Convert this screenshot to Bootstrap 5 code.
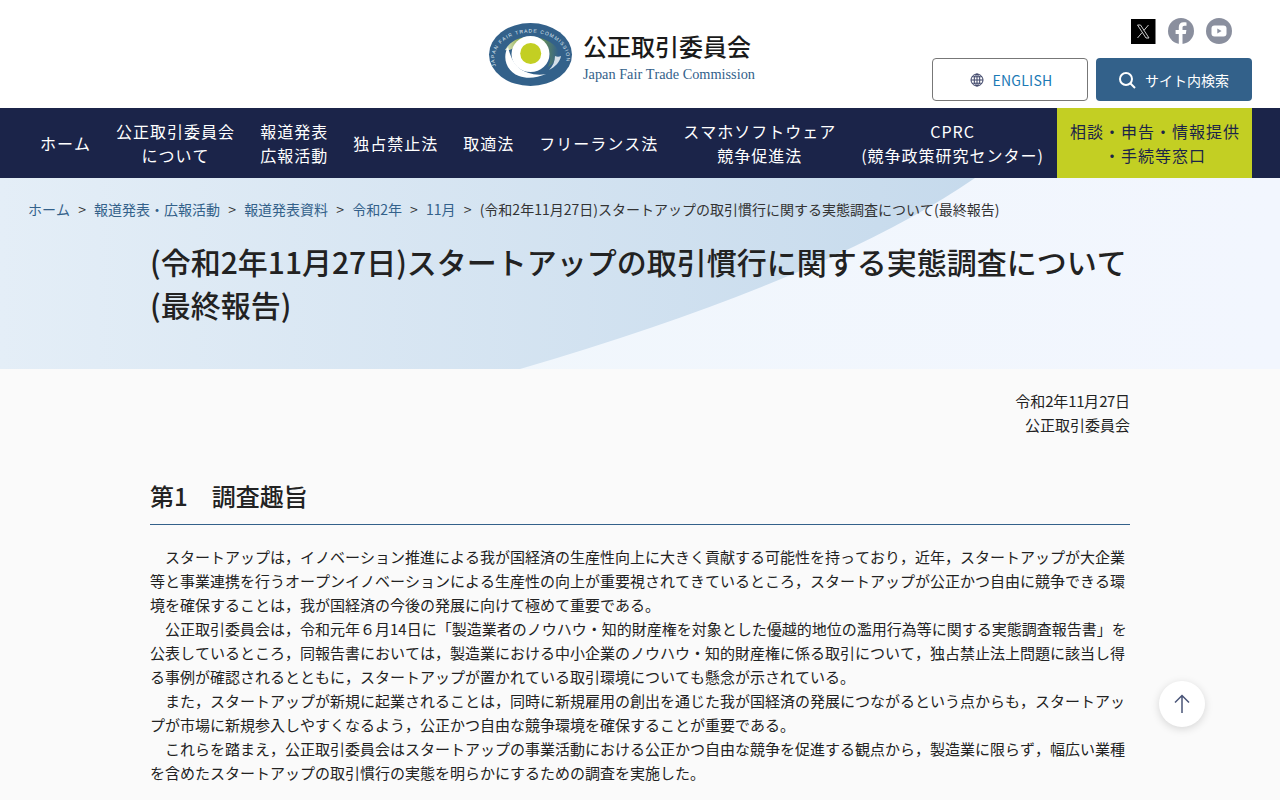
<!DOCTYPE html>
<html lang="ja"><head><meta charset="utf-8">
<title>公正取引委員会</title>
<link href="https://cdn.jsdelivr.net/npm/bootstrap@5.3.0/dist/css/bootstrap.min.css" rel="stylesheet">
<style>
html,body{height:800px;overflow:hidden}
body{font-family:"Noto Sans CJK JP","Noto Sans",sans-serif;background:#fafafa;color:#222;font-size:15px;line-height:24px;font-kerning:none}
.site-head{height:108px;background:#fff;padding:0 28px}
.logo-wrap{left:489px;top:23px}
.logo-svg{overflow:visible}
.logo-txt{margin-left:2px;padding-top:2px}
.logo-ja{font-size:24px;font-weight:500;line-height:34px;color:#1a1a1a}
.logo-en{font-family:"Liberation Serif",serif;font-size:14.300px;line-height:18px;color:#33618a;margin-top:2px}
.head-right{width:320px;padding-top:18px}
.soc-row{padding-right:20px;margin-bottom:14px;gap:12px}
.soc-ico{width:26px;height:26px;display:block}
.btn-en{width:156px;height:43px;border:1px solid #777;border-radius:4px;background:#fff;color:#1b7ab5;font-size:14px;line-height:1;padding:0 0 0 3px;letter-spacing:.25px}
.btn-search{width:156px;height:43px;border:0;border-radius:4px;background:#33618a;color:#fff;font-size:14px;line-height:1;padding:0}
.ico-gap{margin-right:8px}
.ico-gap-s{margin-right:9px;margin-left:-1px}
.main-nav{height:70px;background:#1b2449;padding:0 28px 0 27.600px}
.nav-it{color:#fff;font-size:16px;line-height:24px;letter-spacing:1px;text-decoration:none;text-align:center;height:70px;padding:0 12.500px}
.nav-cta{background:#c3cf23;color:#1b2449;width:195px;flex:none;padding:0 0 0 1px}
.hero{height:191px;background:linear-gradient(90deg,#f0f7fb,#f2f6fe)}
.hero-svg{left:0;top:0;width:1280px;height:191px}
.crumbs{padding:19px 28px 0;font-size:14px;line-height:24px;color:#333;gap:8.150px;position:relative}
.crumbs a{color:#33618a;text-decoration:none}
.ttl-wrap{width:980px;margin:0 auto;position:relative}
.page-ttl{font-size:30px;line-height:42.500px;font-weight:500;margin:19px 0 0;color:#222}
.wrap-main{width:980px;margin:0 auto}
.doc-date{padding-top:20px;font-size:15px}
.date-num{letter-spacing:-.4px}
.sec-h{font-size:24px;line-height:36px;font-weight:500;margin:41px 0 0;padding-bottom:10px;border-bottom:1px solid #33618a;color:#222}
.body-txt{margin:20px 0 0;font-size:15px;line-height:24px;color:#222}
.to-top{right:75px;top:681px;width:46px;height:46px;background:#fff;border-radius:50%;box-shadow:0 2px 8px rgba(0,0,0,.15)}
</style></head>
<body>
<header class="site-head d-flex justify-content-end position-relative">
  <a class="logo-wrap position-absolute d-flex align-items-center text-decoration-none" href="#">
    <svg width="84" height="63" viewBox="0 0 84 63" class="me-2 logo-svg">
      <defs>
        <linearGradient id="lg" x1="0" y1="0" x2="1" y2="0"><stop offset="0" stop-color="#dfe8cf"/><stop offset=".3" stop-color="#8aa83c"/><stop offset=".65" stop-color="#6d9450"/><stop offset="1" stop-color="#33618a"/></linearGradient>
        <path id="ringp" d="M7 43A36 26 0 1 1 76 43"/>
      </defs>
      <ellipse cx="41.500" cy="31.500" rx="41.500" ry="31.500" fill="#33618a"/>
      <path d="M16 27C22 17 31 14 41 14 52 14 64 18 69 27 71 33 66 40 59 44 62 38 63 30 56 24 48 18 32 18 26 24 22 27 19 28 16 27Z" fill="url(#lg)"/>
      <path d="M19 24C13 34 17 48 30 53 38 56 48 55 57 51 47 53 36 50 30 45 24 40 21 32 19 24Z" fill="#fff"/>
      <path d="M72 33C71 39 66 44 60 47 64 43 66 38 66 33 68 34 70 34 72 33Z" fill="#d5dfe8"/>
      <ellipse cx="41.500" cy="31" rx="19" ry="18" fill="#fff"/>
      <circle cx="41.700" cy="30.500" r="10.500" fill="#c3cf23"/>
      <text font-family="Liberation Sans,sans-serif" font-size="5" fill="#dfe7ef"><textPath href="#ringp" textLength="108">JAPAN FAIR TRADE COMMISSION</textPath></text>
    </svg>
    <span class="d-block logo-txt">
      <span class="logo-ja d-block">公正取引委員会</span>
      <span class="logo-en d-block">Japan Fair Trade Commission</span>
    </span>
  </a>
  <div class="head-right d-flex flex-column align-items-end">
    <div class="soc-row d-flex">
      <svg class="soc-ico" viewBox="0 0 26 26"><rect x="1" y="1" width="24.500" height="25" fill="#000"/><path d="M7.500 7h3l8.500 13h-3zM18.500 7L14 12.300M12 14.700L7.500 20" fill="none" stroke="#ccc" stroke-width="1"/></svg>
      <svg class="soc-ico" viewBox="0 0 26 26"><circle cx="13" cy="13" r="13" fill="#8a8f9e"/><path d="M14.500 26V16h3.300l.6-4h-3.900V9.800c0-1.200.5-2 2.100-2h1.900V4.400c-.8-.1-1.800-.2-2.800-.2-3 0-4.900 1.800-4.900 5V12H7.600v4h3.200v10z" fill="#fff"/></svg>
      <svg class="soc-ico" viewBox="0 0 26 26"><circle cx="13" cy="13" r="13" fill="#8a8f9e"/><rect x="5.500" y="7.500" width="15" height="11" rx="3" fill="#fff"/><path d="M11.300 10.500v5l4.300-2.500z" fill="#8a8f9e"/></svg>
    </div>
    <div class="d-flex gap-2">
      <button class="btn-en d-flex align-items-center justify-content-center" type="button">
        <svg width="14" height="14" viewBox="0 0 14 14" class="ico-gap" fill="none" stroke="#3b4266" stroke-width="1"><circle cx="7" cy="7" r="6"/><ellipse cx="7" cy="7" rx="2.800" ry="6"/><path d="M1 7h12M2 3.800h10M2 10.200h10M7 1v12"/></svg>ENGLISH</button>
      <button class="btn-search d-flex align-items-center justify-content-center" type="button">
        <svg width="18" height="18" viewBox="0 0 18 18" class="ico-gap-s" fill="none" stroke="#fff" stroke-width="2"><circle cx="8" cy="8" r="6"/><path d="M12.500 12.500L17 17"/></svg>サイト内検索</button>
    </div>
  </div>
</header>
<nav class="main-nav d-flex justify-content-between">
  <div class="d-flex">
  <a class="nav-it d-flex align-items-center justify-content-center" href="#">ホーム</a>
  <a class="nav-it d-flex align-items-center justify-content-center" href="#">公正取引委員会<br>について</a>
  <a class="nav-it d-flex align-items-center justify-content-center" href="#">報道発表<br>広報活動</a>
  <a class="nav-it d-flex align-items-center justify-content-center" href="#">独占禁止法</a>
  <a class="nav-it d-flex align-items-center justify-content-center" href="#">取適法</a>
  <a class="nav-it d-flex align-items-center justify-content-center" href="#">フリーランス法</a>
  <a class="nav-it d-flex align-items-center justify-content-center" href="#">スマホソフトウェア<br>競争促進法</a>
  <a class="nav-it d-flex align-items-center justify-content-center" href="#">CPRC<br>(競争政策研究センター)</a>
  </div>
  <a class="nav-it nav-cta d-flex align-items-center justify-content-center" href="#">相談・申告・情報提供<br>・手続等窓口</a>
</nav>
<section class="hero position-relative overflow-hidden">
  <svg class="hero-svg position-absolute" viewBox="0 0 1280 191" preserveAspectRatio="none">
    <defs><linearGradient id="hg" x1="0" y1="0" x2="1" y2="0"><stop offset="0" stop-color="#e4eef7"/><stop offset="1" stop-color="#c6daec"/></linearGradient></defs>
    <path d="M0 0H975Q830 100 520 191H0Z" fill="url(#hg)"/>
  </svg>
  <div class="crumbs d-flex">
    <a href="#">ホーム</a><span>&gt;</span><a href="#">報道発表・広報活動</a><span>&gt;</span><a href="#">報道発表資料</a><span>&gt;</span><a href="#">令和2年</a><span>&gt;</span><a href="#">11月</a><span>&gt;</span><span>(令和2年11月27日)スタートアップの取引慣行に関する実態調査について(最終報告)</span>
  </div>
  <div class="ttl-wrap"><h1 class="page-ttl">(令和2年11月27日)スタートアップの取引慣行に関する実態調査について(最終報告)</h1></div>
</section>
<main class="wrap-main">
  <div class="doc-date text-end">令和<span class="date-num">2</span>年<span class="date-num">11</span>月<span class="date-num">27</span>日<br>公正取引委員会</div>
  <h2 class="sec-h">第1　調査趣旨</h2>
  <p class="body-txt">　スタートアップは，イノベーション推進による我が国経済の生産性向上に大きく貢献する可能性を持っており，近年，スタートアップが大企業等と事業連携を行うオープンイノベーションによる生産性の向上が重要視されてきているところ，スタートアップが公正かつ自由に競争できる環境を確保することは，我が国経済の今後の発展に向けて極めて重要である。<br>
  　公正取引委員会は，令和元年６月14日に「製造業者のノウハウ・知的財産権を対象とした優越的地位の濫用行為等に関する実態調査報告書」を公表しているところ，同報告書においては，製造業における中小企業のノウハウ・知的財産権に係る取引について，独占禁止法上問題に該当し得る事例が確認されるとともに，スタートアップが置かれている取引環境についても懸念が示されている。<br>
  　また，スタートアップが新規に起業されることは，同時に新規雇用の創出を通じた我が国経済の発展につながるという点からも，スタートアップが市場に新規参入しやすくなるよう，公正かつ自由な競争環境を確保することが重要である。<br>
  　これらを踏まえ，公正取引委員会はスタートアップの事業活動における公正かつ自由な競争を促進する観点から，製造業に限らず，幅広い業種を含めたスタートアップの取引慣行の実態を明らかにするための調査を実施した。</p>
</main>
<a class="to-top position-fixed d-flex align-items-center justify-content-center" href="#" aria-label="ページトップ">
  <svg width="16" height="20" viewBox="0 0 16 20" fill="none" stroke="#4a5578" stroke-width="1.500"><path d="M8 19V1.500M1 8.500l7-7 7 7"/></svg>
</a>
</body></html>
